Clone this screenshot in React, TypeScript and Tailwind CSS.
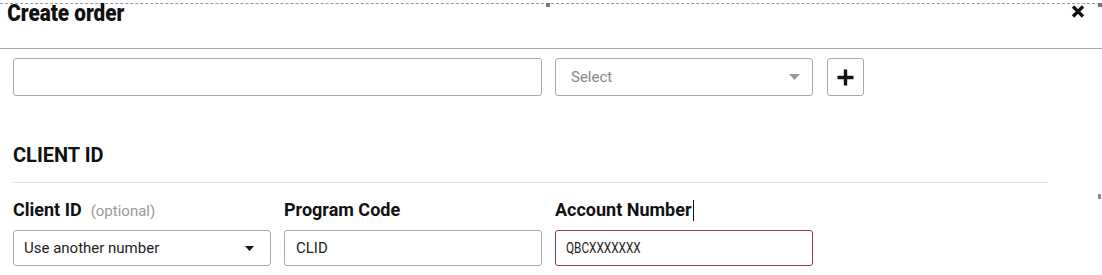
import React from "react";

function Caret({ color, w, h }: { color: string; w: number; h: number }) {
  return (
    <svg width={w} height={h} viewBox={`0 0 ${w} ${h}`} className="shrink-0">
      <polygon points={`0,0 ${w},0 ${w / 2},${h}`} fill={color} />
    </svg>
  );
}

export default function App() {
  return (
    <div className="relative w-[1102px] h-[275px] overflow-hidden bg-white font-['Roboto',sans-serif] text-[#1a1a1a]">
      {/* resize handles */}
      <div className="absolute left-[546px] top-[3px] w-[4px] h-[4px] bg-[#777]" />
      <div className="absolute left-[1098px] top-[3px] w-[4px] h-[4px] bg-[#777]" />
      <div className="absolute left-[1098px] top-[194px] w-[3px] h-[5px] bg-[#888]" />

      <div className="mt-[3px] border-t border-dashed border-[#999] w-[1100px]" />

      {/* header */}
      <div className="h-[45px] border-b border-[#aaa] flex items-start justify-between">
        <h1 className="pl-[8px] text-[23px] leading-[20px] font-black text-[#111] inline-block origin-left scale-x-[0.9] whitespace-nowrap">
          Create order
        </h1>
        <svg width="14" height="13" viewBox="0 0 14 13" className="mr-[17px] mt-[1px]">
          <path d="M2 1.5 L12 11.5 M12 1.5 L2 11.5" stroke="#111" strokeWidth="3.2" strokeLinecap="butt" />
        </svg>
      </div>

      {/* top row */}
      <div className="pt-[9px] px-[13px] flex items-center">
        <input className="w-[529px] h-[38px] border border-[#aaa] rounded-[3px] outline-none" />
        <div className="ml-[13px] w-[258px] h-[38px] border border-[#aaa] rounded-[3px] flex items-center justify-between pl-[15px] pr-[12px]">
          <span className="text-[15px] text-[#888]">Select</span>
          <Caret color="#999" w={11} h={6} />
        </div>
        <button className="ml-[14px] w-[37px] h-[38px] border border-[#aaa] rounded-[3px] flex items-center justify-center bg-white">
          <svg width="17" height="17" viewBox="0 0 17 17">
            <path d="M8.5 0.5 V16.5 M0.5 8.5 H16.5" stroke="#111" strokeWidth="3.4" />
          </svg>
        </button>
      </div>

      {/* CLIENT ID section */}
      <div className="px-[13px]">
        <h2 className="mt-[47px] text-[20px] leading-[24px] font-bold text-[#111]">CLIENT ID</h2>
        <div className="mt-[15px] w-[1035px] border-t border-[#e3e3e3]" />

        <div className="mt-[16px] flex gap-[13px]">
          <div className="w-[258px] flex flex-col">
            <div className="h-[22px] leading-[22px] flex items-baseline whitespace-nowrap">
              <span className="text-[18px] font-bold text-[#111]">Client ID</span>
              <span className="ml-[9px] text-[15px] text-[#999]">(optional)</span>
            </div>
            <div className="mt-[9px] h-[36px] border border-[#aaa] rounded-[3px] flex items-center justify-between pl-[10px] pr-[16px]">
              <span className="text-[15px] text-[#222]">Use another number</span>
              <Caret color="#111" w={9} h={5} />
            </div>
          </div>

          <div className="w-[258px] flex flex-col">
            <div className="h-[22px] leading-[22px] text-[18px] font-bold text-[#111] whitespace-nowrap">Program Code</div>
            <div className="mt-[9px] h-[36px] border border-[#aaa] rounded-[3px] flex items-center pl-[11px]">
              <span className="text-[15px] text-[#222]">CLID</span>
            </div>
          </div>

          <div className="w-[258px] flex flex-col">
            <div className="h-[22px] leading-[22px] text-[18px] font-bold text-[#111] whitespace-nowrap flex items-center">
              <span>Account Number</span>
              <span className="ml-[1px] w-[1px] h-[21px] bg-[#111]" />
            </div>
            <div className="mt-[9px] h-[36px] border border-[#94404a] rounded-[3px] flex items-center pl-[10px]">
              <span className="inline-block origin-left scale-x-[0.84] text-[14px] text-[#222] whitespace-nowrap">QBCXXXXXXX</span>
            </div>
          </div>
        </div>
      </div>
    </div>
  );
}
